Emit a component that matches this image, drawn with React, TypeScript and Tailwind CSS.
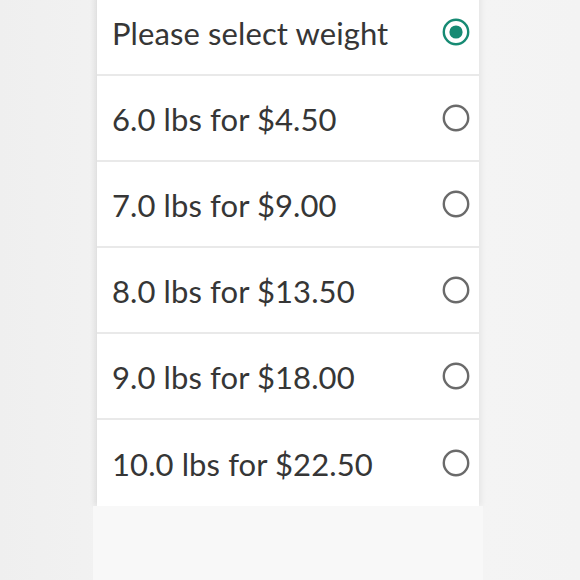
import React from "react";

const options = [
  { label: "Please select weight", selected: true },
  { label: "6.0 lbs for $4.50" },
  { label: "7.0 lbs for $9.00" },
  { label: "8.0 lbs for $13.50" },
  { label: "9.0 lbs for $18.00" },
  { label: "10.0 lbs for $22.50" },
];

function Radio({ selected }: { selected?: boolean }) {
  return (
    <svg width="28" height="28" viewBox="0 0 28 28" className="shrink-0">
      <circle
        cx="14"
        cy="14"
        r="12.2"
        fill="none"
        stroke={selected ? "#168a73" : "#6a6a6a"}
        strokeWidth="2.4"
      />
      {selected && <circle cx="14" cy="14" r="6.6" fill="#168a73" />}
    </svg>
  );
}

export default function App() {
  return (
    <div className="w-[580px] h-[580px] overflow-hidden bg-gradient-to-r from-[#efefef] via-[#f6f6f6] to-[#f3f3f3] flex font-['Lato',sans-serif]">
      <div className="ml-[97px] w-[382px] flex flex-col">
        <ul className="-mt-[10px] bg-white shadow-[-3px_0_5px_rgba(0,0,0,0.07),3px_0_5px_rgba(0,0,0,0.05)]">
          {options.map((opt, i) => (
            <li
              key={opt.label}
              className={
                "h-[86px] flex items-center justify-between pl-[15px] pr-[9px] " +
                (i < options.length - 1 ? "border-b-2 border-[#e9e9e9]" : "h-[84px]")
              }
            >
              <span className="pt-[2px] text-[31px] leading-none text-[#363636] tracking-[0.1px]">{opt.label}</span>
              <Radio selected={opt.selected} />
            </li>
          ))}
        </ul>
        <div className="flex-1 -mx-[4px] bg-[#f8f8f8]"></div>
      </div>
    </div>
  );
}
